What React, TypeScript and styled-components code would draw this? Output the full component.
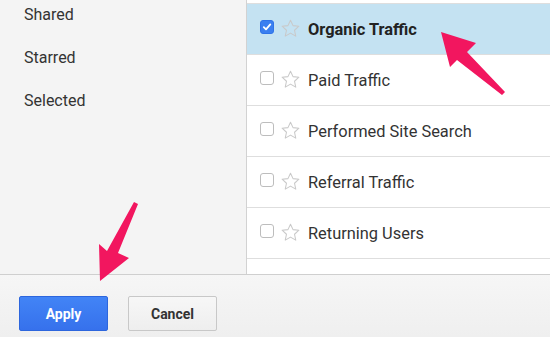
import styled, { createGlobalStyle } from "styled-components";

const GlobalStyle = createGlobalStyle`
    html, body {
        margin: 0;
        padding: 0;
        background: #ffffff;
    }
    body {
        font-family: Roboto, "Liberation Sans", Arial, sans-serif;
        color: #333333;
    }
`;

const Frame = styled.div`
    position: relative;
    width: 550px;
    height: 337px;
    overflow: hidden;
    display: flex;
    flex-direction: column;
`;

const Main = styled.div`
    height: 274px;
    display: flex;
    flex-direction: row;
`;

const Sidebar = styled.nav`
    width: 247px;
    background: #f4f4f4;
    border-right: 1px solid #d2d2d2;
    display: flex;
    flex-direction: column;
    gap: 24px;
    padding: 5px 0 0 24px;
    box-sizing: border-box;
`;

const SideItem = styled.div`
    font-size: 16px;
    line-height: 19px;
    color: #333333;
`;

const ListPanel = styled.div`
    flex: 1;
    overflow: hidden;
    background: #ffffff;
    padding-top: 3px;
`;

const List = styled.ul`
    list-style: none;
    margin: 0;
    padding: 0;
    border-top: 1px solid #dedede;
`;

const Row = styled.li<{ $selected?: boolean }>`
    height: 50px;
    border-bottom: 1px solid #dedede;
    background: ${(p) => (p.$selected ? "#c4e2f2" : "#ffffff")};
    display: flex;
    align-items: center;
    padding-left: 13px;
`;

const Box = styled.span<{ $checked?: boolean }>`
    width: 14px;
    height: 14px;
    box-sizing: border-box;
    border-radius: 3px;
    border: 1px solid ${(p) => (p.$checked ? "#2f73e8" : "#bdbdbd")};
    background: ${(p) => (p.$checked ? "#3a7ff0" : "#ffffff")};
    display: flex;
    align-items: center;
    justify-content: center;
    margin-bottom: 5px;
    flex-shrink: 0;
`;

const StarWrap = styled.span`
    display: flex;
    margin-left: 6px;
    margin-bottom: 2px;
`;

const Label = styled.span<{ $bold?: boolean }>`
    margin-left: 7px;
    font-size: 16.4px;
    font-weight: ${(p) => (p.$bold ? 700 : 400)};
    color: ${(p) => (p.$bold ? "#222222" : "#333333")};
`;

const Footer = styled.div`
    flex: 1;
    border-top: 1px solid #cfcfcf;
    background: linear-gradient(#f6f6f6, #efefef);
    display: flex;
    align-items: flex-start;
    gap: 20px;
    padding: 21px 0 0 19px;
`;

const Button = styled.button<{ $primary?: boolean }>`
    width: 89px;
    height: 35px;
    border-radius: 2px;
    font-family: Roboto, "Liberation Sans", Arial, sans-serif;
    font-size: 14px;
    font-weight: 700;
    cursor: pointer;
    border: 1px solid ${(p) => (p.$primary ? "#2d66dd" : "#c8c8c8")};
    color: ${(p) => (p.$primary ? "#ffffff" : "#333333")};
    background: ${(p) =>
        p.$primary
            ? "linear-gradient(#4284f6, #3671ec)"
            : "linear-gradient(#f7f7f7, #eeeeee)"};
`;

const Overlay = styled.svg`
    position: absolute;
    left: 0;
    top: 0;
    pointer-events: none;
`;

// the last entry only peeks out above the footer, so it has no label
const segments = [
    { name: "Organic Traffic", selected: true },
    { name: "Paid Traffic" },
    { name: "Performed Site Search" },
    { name: "Referral Traffic" },
    { name: "Returning Users" },
    { name: "" },
];

function Star() {
    return (
        <svg width="21" height="21" viewBox="0 0 24 24">
            <path
                d="M12 2.5l2.9 6.2 6.7.7-5 4.6 1.4 6.7L12 17.3l-6 3.4 1.4-6.7-5-4.6 6.7-.7z"
                fill="none"
                stroke="#c9c9c9"
                strokeWidth="1.2"
                strokeLinejoin="round"
            />
        </svg>
    );
}

function Check() {
    return (
        <svg width="10" height="10" viewBox="0 0 10 10">
            <path d="M1.8 5.2l2.2 2.2 4.3-5" fill="none" stroke="#ffffff" strokeWidth="1.8" strokeLinecap="round" strokeLinejoin="round" />
        </svg>
    );
}

export default function App() {
    return (
        <Frame>
            <GlobalStyle />
            <Main>
                <Sidebar>
                    <SideItem>Shared</SideItem>
                    <SideItem>Starred</SideItem>
                    <SideItem>Selected</SideItem>
                </Sidebar>
                <ListPanel>
                    <List>
                        {segments.map((s, i) => (
                            <Row key={i} $selected={s.selected}>
                                <Box $checked={s.selected}>{s.selected && <Check />}</Box>
                                <StarWrap>
                                    <Star />
                                </StarWrap>
                                {s.name && <Label $bold={s.selected}>{s.name}</Label>}
                            </Row>
                        ))}
                    </List>
                </ListPanel>
            </Main>
            <Footer>
                <Button $primary>Apply</Button>
                <Button>Cancel</Button>
            </Footer>
            {/* callout arrows drawn over the screenshot */}
            <Overlay width="550" height="337" viewBox="0 0 550 337">
                <polygon points="441,32 476,43 467,52 505,92 502,95 457,60 450,67" fill="#f2165f" />
                <polygon points="134,202 138,204 118,253 129,258 100,281 99,244 107,251" fill="#f2165f" />
            </Overlay>
        </Frame>
    );
}
